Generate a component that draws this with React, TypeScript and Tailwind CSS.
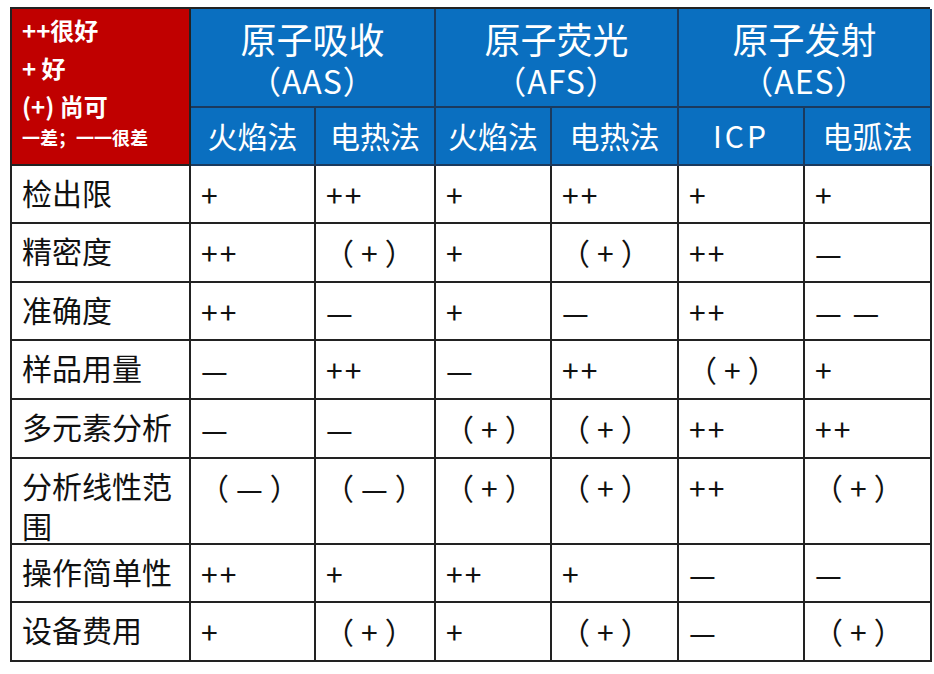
import React from 'react';

const font = { fontFamily: '"Noto Sans CJK SC", "Noto Sans", sans-serif' };

const rows: { label: string; cells: string[] }[] = [
  { label: '检出限', cells: ['+', '++', '+', '++', '+', '+'] },
  { label: '精密度', cells: ['++', '（+）', '+', '（+）', '++', '—'] },
  { label: '准确度', cells: ['++', '—', '+', '—', '++', '— —'] },
  { label: '样品用量', cells: ['—', '++', '—', '++', '（+）', '+'] },
  { label: '多元素分析', cells: ['—', '—', '（+）', '（+）', '++', '++'] },
  { label: '分析线性范围', cells: ['（—）', '（—）', '（+）', '（+）', '++', '（+）'] },
  { label: '操作简单性', cells: ['++', '+', '++', '+', '—', '—'] },
  { label: '设备费用', cells: ['+', '（+）', '+', '（+）', '—', '（+）'] },
];

const groups = [
  { name: '原子吸收', abbr: '（AAS）' },
  { name: '原子荧光', abbr: '（AFS）' },
  { name: '原子发射', abbr: '（AES）' },
];

const methods = ['火焰法', '电热法', '火焰法', '电热法', 'ICP', '电弧法'];

export default function App() {
  return (
    <div className="w-[934px] h-[674px] bg-white pl-[10px] pt-[7px]" style={font}>
      {/* comparison table */}
      <div className="grid grid-cols-[179px_125px_120px_116px_127px_126px_127px] grid-rows-[99px_58px_58px_59px_58px_59px_59px_86px_58px_59px] w-[920px] border-l-2 border-t-2 border-[#222]">
        {/* legend */}
        <div className="row-span-2 bg-[#c00000] border-r-2 border-b-2 border-[#222] pl-[10px] pt-[2px] text-white font-bold">
          <div className="text-[24px] leading-[38px]">++很好</div>
          <div className="text-[24px] leading-[38px]">+ 好</div>
          <div className="text-[24px] leading-[38px]">(+) 尚可</div>
          <div className="text-[18px] leading-[24px]">一差；一一很差</div>
        </div>

        {groups.map((g) => (
          <div
            key={g.name}
            className="col-span-2 bg-[#0a6fc0] border-r-2 border-b-2 border-[#1b3a5e] flex flex-col items-center justify-center pt-[2px] text-white"
          >
            <div className="text-[36px] leading-[42px]">{g.name}</div>
            <div className="text-[32px] leading-[42px] tracking-[1px]">{g.abbr}</div>
          </div>
        ))}

        {methods.map((m, i) => (
          <div
            key={i}
            className="bg-[#0a6fc0] border-r-2 border-b-2 border-[#1b3a5e] flex items-center justify-center text-white text-[30px] pb-[2px]"
          >
            {m === 'ICP' ? <span className="tracking-[3px]">ICP</span> : m}
          </div>
        ))}

        {rows.map((r) => (
          <React.Fragment key={r.label}>
            <div className="border-r-2 border-b-2 border-[#222] pl-[10px] pt-[6px] text-[30px] leading-[40px] text-[#111]">
              {r.label}
            </div>
            {r.cells.map((c, i) => (
              <div
                key={i}
                className={`border-r-2 border-b-2 border-[#222] pt-[8px] text-[30px] leading-[40px] text-[#111] whitespace-pre ${
                  c.includes('（') ? 'pl-[8px] tracking-[7px]' : 'pl-[10px] tracking-[2px]'
                }`}
              >
                {c}
              </div>
            ))}
          </React.Fragment>
        ))}
      </div>
    </div>
  );
}
